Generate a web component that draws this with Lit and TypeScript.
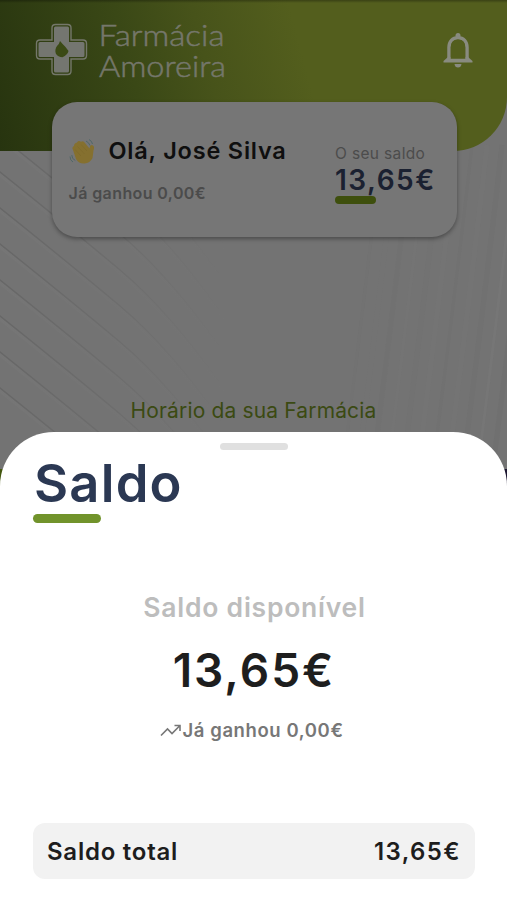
import { LitElement, html, css, svg } from "lit";
import { customElement, property } from "lit/decorators.js";

@customElement("pharmacy-logo")
class PharmacyLogo extends LitElement {
  static styles = css`
    :host { display: block; }
    svg { display: block; }
    text { font-family: Lato, "Open Sans", sans-serif; font-weight: 300; font-size: 29px; fill: #75776b; stroke: #75776b; stroke-width: .5px; }
  `;
  render() {
    return html`<svg width="200" height="80" viewBox="34 6 200 80" role="img" aria-label="Farmácia Amoreira">
      <path d="M55.500 24.500h12q3.500 0 3.500 3.500v12h12q3.500 0 3.500 3.500v12q0 3.500 -3.500 3.500h-12v12q0 3.500 -3.500 3.500h-12q-3.500 0 -3.500 -3.500v-12h-12q-3.500 0 -3.500 -3.500v-12q0 -3.500 3.500 -3.500h12v-12q0 -3.500 3.500 -3.500z" fill="none" stroke="#74776a" stroke-width="1.400"/>
      <path d="M55.500 26.500h12q1.500 0 1.500 1.500v14h14q1.500 0 1.500 1.500v12q0 1.500 -1.500 1.500h-14v14q0 1.500 -1.500 1.500h-12q-1.500 0 -1.500 -1.500v-14h-14q-1.500 0 -1.500 -1.500v-12q0 -1.500 1.500 -1.500h14v-14q0 -1.500 1.500 -1.500z" fill="#747670"/>
      <path d="M60 41Q62.500 44 65.500 47L68.500 51Q67.500 55 62.500 57.300Q58 57.300 55.800 53.500Q54.500 49.500 57 46Q59.300 44 60 41z" fill="#3b4a15"/>
      <text x="98.500" y="46" textLength="126" lengthAdjust="spacingAndGlyphs">Farmácia</text>
      <text x="99" y="77" textLength="127" lengthAdjust="spacingAndGlyphs">Amoreira</text>
    </svg>`;
  }
}

@customElement("bell-icon")
class BellIcon extends LitElement {
  static styles = css`:host, svg { display: block; }`;
  render() {
    return html`<svg width="30" height="37" viewBox="0 0 30 37">
      <circle cx="15" cy="3.500" r="2.500" fill="#898b80"/>
      <path d="M6 28V15.500C6 9.500 9.500 5.700 15 5.700S24 9.500 24 15.500V28" fill="none" stroke="#898b80" stroke-width="3.500"/>
      <path d="M.5 30.500V29L5 25h20l4.500 4v1.500z" fill="#898b80"/>
      <path d="M7.750 26.800V15.500C7.750 10.500 10.500 7.500 15 7.500S22.250 10.500 22.250 15.500V26.800z" fill="#535e1d"/>
      <path d="M11.500 32h7q-.5 3.500-3.500 3.500T11.500 32z" fill="#898b80"/>
    </svg>`;
  }
}

@customElement("wave-hand")
class WaveHand extends LitElement {
  static styles = css`:host, svg { display: block; }`;
  render() {
    return html`<svg width="27" height="27" viewBox="0 0 27 27">
      <path d="M4 12Q2.500 9 5 8Q5 5 8 4.500Q9.500 2 12 3.800Q14.500 2.500 16 5L20.500 10.500Q21 6.500 23.500 7.200Q26 8 24.500 12.500L23.500 20Q21 25 15.500 25.500Q10 26 7 21Z" fill="#85702f"/>
      <path d="M6 11.500l6 6.500M8.500 8.500l7 7.500M12 6.500l6 6.500" stroke="#7b6629" stroke-width=".5" fill="none"/>
      <path d="M17 3q3 1.500 4 4.500M20 1.500q3 1.500 3.500 4.500M2.800 17q0 4 3.500 5.500M1 18.500q0 4 3 5.500" stroke="#4f6869" stroke-width="1" fill="none"/>
    </svg>`;
  }
}

@customElement("wave-pattern")
class WavePattern extends LitElement {
  static styles = css`:host, svg { display: block; }`;
  render() {
    const left = Array.from({ length: 15 }, (_, i) => {
      const y = 446 - i * 36;
      return svg`<path d="M-5 ${y - 62} Q70 ${y - 2} 120 ${y + 40} T225 ${y + 160}" fill="none" stroke="url(#fade)" stroke-width="1.500"/>
      <path d="M-5 ${y - 59} Q70 ${y + 1} 120 ${y + 43} T225 ${y + 163}" fill="none" stroke="url(#light)" stroke-width="3"/>`;
    });
    const right = Array.from({ length: 14 }, (_, i) => {
      const x = 350 + i * 15;
      return svg`<path d="M${x + 32} 145 Q${x + 18} 270 ${x - 8} 475" fill="none" stroke="${i % 2 ? "#7a7a7a" : "#6c6c6c"}" stroke-opacity="${0.08 + i * 0.03}" stroke-width="${i % 3 ? 5 : 3}"/>`;
    });
    return html`<svg width="507" height="480" viewBox="0 0 507 480">
      <defs>
        <linearGradient id="fade" gradientUnits="userSpaceOnUse" x1="0" y1="0" x2="230" y2="0"><stop stop-color="#676767"/><stop offset=".55" stop-color="#6b6b6b" stop-opacity=".7"/><stop offset="1" stop-color="#707070" stop-opacity="0"/></linearGradient>
        <linearGradient id="light" gradientUnits="userSpaceOnUse" x1="0" y1="0" x2="230" y2="0"><stop stop-color="#787878" stop-opacity=".5"/><stop offset="1" stop-color="#757575" stop-opacity="0"/></linearGradient>
      </defs>${left}${right}</svg>`;
  }
}

@customElement("balance-card")
class BalanceCard extends LitElement {
  @property() name = "";
  @property() balance = "";
  @property() earned = "";
  static styles = css`
    :host { display: flex; justify-content: space-between; box-sizing: border-box; width: 405px; height: 135px; padding: 0 21.500px 0 17px; border-radius: 25px; background: #767676; box-shadow: 0 2px 4px rgba(0,0,0,.35); white-space: nowrap; }
    .hello { display: flex; align-items: center; gap: 13px; height: 28px; margin-top: 35px; }
    .name { font-size: 23.500px; line-height: 28px; font-weight: 600; color: #0f0f0f; letter-spacing: .8px; }
    .earned { margin-top: 17px; font-size: 16px; line-height: 22px; font-weight: 600; color: #4b4b4b; letter-spacing: .4px; }
    .right { width: 100px; padding-top: 41px; }
    .label { font-size: 15.500px; line-height: 22px; color: #4c4c4c; letter-spacing: .35px; }
    .value { font-size: 28px; line-height: 31px; font-weight: 600; color: #1b2131; letter-spacing: 1.500px; }
    .bar { width: 41px; height: 8px; border-radius: 4px; background: #3e4f0d; }
  `;
  render() {
    return html`<div>
        <div class="hello"><wave-hand></wave-hand><span class="name">Olá, ${this.name}</span></div>
        <div class="earned">Já ganhou ${this.earned}</div>
      </div>
      <div class="right"><div class="label">O seu saldo</div><div class="value">${this.balance}</div><div class="bar"></div></div>`;
  }
}

@customElement("balance-sheet")
class BalanceSheet extends LitElement {
  @property() balance = "";
  @property() earned = "";
  static styles = css`
    :host { display: flex; flex-direction: column; box-sizing: border-box; height: 468px; padding: 11px 32px 21px 33px; border-radius: 54px 54px 0 0; background: #fff; white-space: nowrap; }
    .grip { width: 68px; height: 7px; border-radius: 4px; background: #e0e0e0; align-self: center; }
    .title { margin: 2px 0 0 1px; font-size: 52.500px; line-height: 62px; font-weight: 600; color: #2b3853; letter-spacing: 1.200px; }
    .bar { width: 68px; height: 9px; border-radius: 5px; background: #71932b; }
    .center { display: flex; flex-direction: column; align-items: center; padding-top: 67px; }
    .label { font-size: 26.500px; line-height: 34px; font-weight: 600; color: #bdbdbd; letter-spacing: .75px; padding-left: 1px; }
    .value { margin-top: 18px; font-size: 46px; line-height: 56px; font-weight: 600; color: #1e1e1e; letter-spacing: 2px; }
    .earned { display: flex; align-items: center; margin: 20px 4px 0 0; font-size: 18.500px; line-height: 24px; font-weight: 600; color: #777; letter-spacing: .6px; }
    .total { display: flex; justify-content: space-between; align-items: center; box-sizing: border-box; height: 56px; margin-top: auto; padding: 0 14px; border-radius: 12px; background: #f2f2f2; font-size: 24px; font-weight: 600; color: #1d1d1d; letter-spacing: .75px; }
    .tv { letter-spacing: 1.400px; }
  `;
  render() {
    return html`<div class="grip"></div>
      <div class="title">Saldo</div><div class="bar"></div>
      <div class="center">
        <div class="label">Saldo disponível</div>
        <div class="value">${this.balance}</div>
        <div class="earned"><svg width="22" height="16" viewBox="0 0 22 16"><path d="M1 13.500L7.500 7l4.500 4.500L19.500 4M14.500 3.500h5.500v5.500" fill="none" stroke="#777" stroke-width="1.600"/></svg><span>Já ganhou ${this.earned}</span></div>
      </div>
      <div class="total"><span>Saldo total</span><span class="tv">${this.balance}</span></div>`;
  }
}

@customElement("app-root")
class AppRoot extends LitElement {
  static styles = css`
    :host { display: block; position: relative; width: 507px; height: 900px; overflow: hidden; background: #737373; font-family: Inter, "Liberation Sans", sans-serif; }
    .pattern { position: absolute; inset: 0 0 auto 0; }
    .header { position: relative; display: flex; justify-content: space-between; align-items: flex-start; box-sizing: border-box; height: 151px; padding: 6px 34px 0 34px; border-radius: 0 0 54px 0; background: linear-gradient(180deg, rgba(0,0,0,.3), transparent 3px), linear-gradient(75deg, #27340f 0%, #3a4816 28%, #47531a 42%, #535e1d 60%, #535e1d 100%); }
    bell-icon { margin-top: 26px; }
    balance-card { position: relative; margin: -49px 0 0 51.500px; }
    .hours { position: relative; margin-top: 160px; text-align: center; font-size: 21px; line-height: 28px; color: #3b4a12; letter-spacing: .15px; }
    .footer { position: absolute; top: 469px; left: 0; right: 0; height: 40px; background: linear-gradient(90deg, #43570f, #1c1630); }
    balance-sheet { position: absolute; left: 0; right: 0; bottom: 0; }
  `;
  render() {
    return html`<wave-pattern class="pattern"></wave-pattern>
      <div class="header"><pharmacy-logo></pharmacy-logo><bell-icon></bell-icon></div>
      <balance-card name="José Silva" balance="13,65€" earned="0,00€"></balance-card>
      <div class="hours">Horário da sua Farmácia</div>
      <div class="footer"></div>
      <balance-sheet balance="13,65€" earned="0,00€"></balance-sheet>`;
  }
}
